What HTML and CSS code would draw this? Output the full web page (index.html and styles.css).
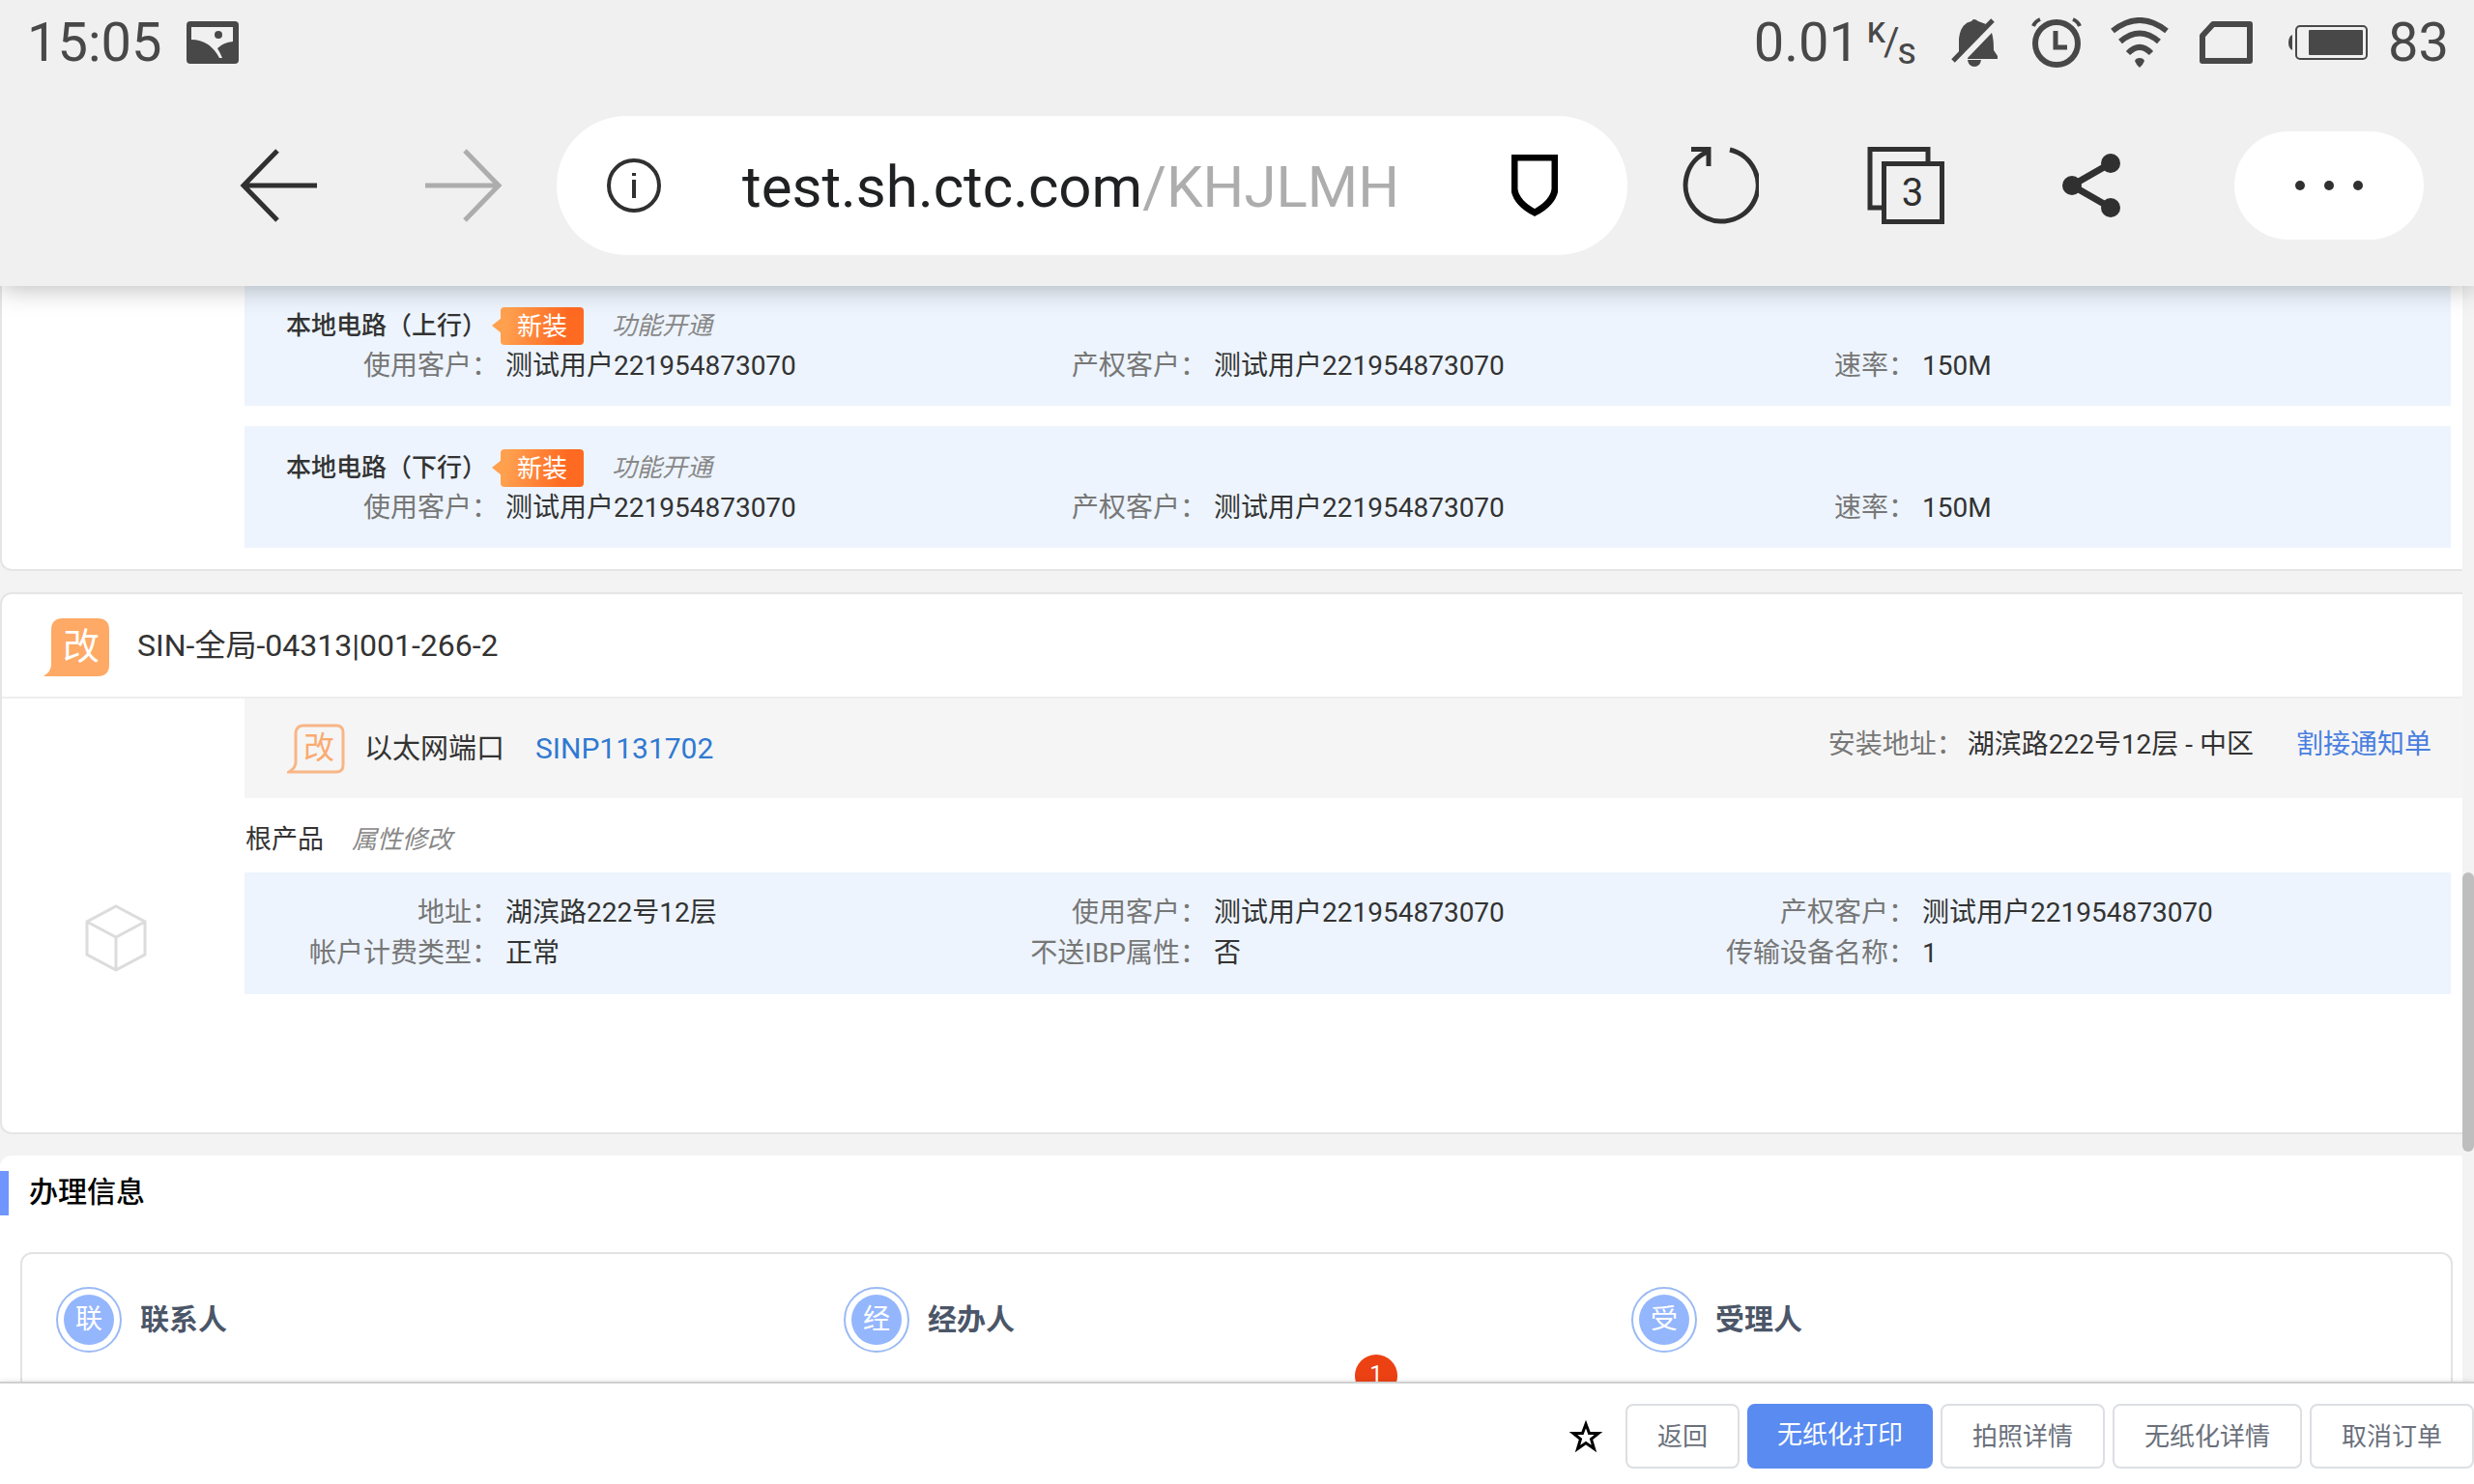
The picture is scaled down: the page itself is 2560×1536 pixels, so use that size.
FILE: index.html
```html
<!DOCTYPE html>
<html lang="zh-CN">
<head>
<meta charset="utf-8">
<title>订单详情</title>
<link rel="stylesheet" href="styles.css">
</head>
<body>
<header class="browser">
  <div class="status">
    <span class="clock">15:05</span>
    <svg class="picture" width="54" height="44" viewBox="0 0 54 44"><rect width="54" height="44" rx="4" fill="#484848"/><path d="M5 6H48V21Q38 22 32 28Q35 33 37 38H34Q24 19 5 19Z" fill="#f0f0f0"/><circle cx="33" cy="14" r="4" fill="#484848"/></svg>
    <div class="status-right">
      <span>0.01</span>
      <span class="rate"><sup>K</sup><i>/</i><sub>S</sub></span>
      <svg class="bell" width="50" height="52" viewBox="0 0 50 52"><path d="M9 38V22Q11 6 22 4Q24 0 29 4L37 7ZM18 42 43 16Q45 22 45 34L49 40V43H18ZM18 44H32Q31 51 25 51Q19 51 18 44Z" fill="#484848"/><path d="M3 45 44 3" stroke="#484848" stroke-width="5" fill="none"/></svg>
      <svg class="alarm" width="52" height="52" viewBox="0 0 52 52" fill="none" stroke="#484848"><circle cx="26" cy="27" r="22" stroke-width="6"/><path d="M25 14V31H37" stroke-width="5"/><path d="M2 9Q4 4 9 2M43 2Q48 4 50 9" stroke-width="4"/></svg>
      <svg class="wifi" width="60" height="52" viewBox="0 0 60 52" fill="none" stroke="#484848" stroke-width="6"><path d="M2 14Q30-8 58 14M10 25Q30 8 50 25M18 37Q30 25 42 37"/><path d="M30 42Q34 42 35 45Q33 50 30 52Q27 50 25 45Q26 42 30 42Z" fill="#484848" stroke="none"/></svg>
      <svg class="sim" width="56" height="44" viewBox="0 0 56 44"><path d="M14 3H52V41H3V15Z" fill="none" stroke="#484848" stroke-width="6" stroke-linejoin="round"/></svg>
      <svg class="battery" width="82" height="36" viewBox="0 0 82 36"><path d="M4 10V26Q0 24 0 18Q0 12 4 10Z" fill="#484848"/><rect x="8" y="1" width="73" height="34" rx="4" fill="none" stroke="#484848" stroke-width="2"/><rect x="21" y="5" width="56" height="26" rx="1" fill="#484848"/></svg>
      <span>83</span>
    </div>
  </div>
  <nav class="toolbar">
    <button class="tool" aria-label="后退"><svg width="80" height="80" viewBox="0 0 80 80"><path d="M39 4 4 40 39 76M4 40H80" fill="none" stroke="#303030" stroke-width="5"/></svg></button>
    <button class="tool forward" aria-label="前进"><svg width="80" height="80" viewBox="0 0 80 80"><path d="M41 4 76 40 41 76M76 40H0" fill="none" stroke="#adadad" stroke-width="5"/></svg></button>
    <button class="address">
      <svg width="56" height="56" viewBox="0 0 56 56"><circle cx="28" cy="28" r="26" fill="none" stroke="#303030" stroke-width="4"/><path d="M28 22V41M28 15V18" stroke="#303030" stroke-width="4"/></svg>
      <span class="url">test.sh.ctc.com<span class="path">/KHJLMH</span></span>
      <svg width="48" height="64" viewBox="0 0 48 64"><path d="M3 3H45V36Q43 50 24 60Q5 50 3 36Z" fill="none" stroke="#000" stroke-width="7"/></svg>
    </button>
    <button class="tool" aria-label="刷新"><svg width="80" height="80" viewBox="0 0 80 80" fill="none" stroke="#303030" stroke-width="5"><path d="M50 3A37.500 37.500 0 1 1 27 5"/><path d="M10 2.500H28V20"/></svg></button>
    <button class="tool tabs" aria-label="标签页"><svg width="80" height="80" viewBox="0 0 80 80" fill="none" stroke="#303030" stroke-width="5"><path d="M15 63H3V2.500H63V15"/><rect x="17.500" y="17.500" width="60" height="60"/></svg><span>3</span></button>
    <button class="tool share" aria-label="分享"><svg width="80" height="80" viewBox="0 0 80 80" fill="#303030"><path d="M60 17 20 40 60 63" fill="none" stroke="#303030" stroke-width="7"/><circle cx="20" cy="40" r="10"/><circle cx="60" cy="17" r="10"/><circle cx="60" cy="63" r="10"/></svg></button>
    <button class="more" aria-label="更多"><svg width="80" height="12" viewBox="0 0 80 12" fill="#303030"><circle cx="10" cy="6" r="5"/><circle cx="40" cy="6" r="5"/><circle cx="70" cy="6" r="5"/></svg></button>
  </nav>
</header>

<main class="viewport">
  <div class="page">
    <section class="card first">
      <div class="products">
        <article class="panel cut">
          <h3 class="circuit"><span>本地电路（上行）</span><span class="tag">新装</span><em>功能开通</em></h3>
          <dl class="fields">
            <div><dt>使用客户：</dt><dd>测试用户221954873070</dd></div>
            <div><dt>产权客户：</dt><dd>测试用户221954873070</dd></div>
            <div><dt>速率：</dt><dd>150M</dd></div>
          </dl>
        </article>
        <article class="panel">
          <h3 class="circuit"><span>本地电路（下行）</span><span class="tag">新装</span><em>功能开通</em></h3>
          <dl class="fields">
            <div><dt>使用客户：</dt><dd>测试用户221954873070</dd></div>
            <div><dt>产权客户：</dt><dd>测试用户221954873070</dd></div>
            <div><dt>速率：</dt><dd>150M</dd></div>
          </dl>
        </article>
      </div>
    </section>

    <section class="card">
      <h2 class="card-title">
        <span class="bubble large"><svg width="68" height="60" viewBox="0 0 68 60"><path d="M20 0H56Q68 0 68 12V48Q68 60 56 60H0Q8 55 8 48V12Q8 0 20 0Z" fill="#fea965"/></svg><b>改</b></span>
        SIN-全局-04313|001-266-2
      </h2>
      <div class="card-body">
        <div class="thumb"><svg width="64" height="70" viewBox="0 0 64 70" fill="none" stroke="#dcdcdc" stroke-width="3"><path d="M32 2 62 18V52L32 68 2 52V18ZM2 18 32 34 62 18M32 34V68"/></svg></div>
        <div class="detail">
          <div class="port">
            <span class="bubble small"><svg width="60" height="52" viewBox="0 0 60 52"><path d="M17 2H51Q58 2 58 9V43Q58 50 51 50H2Q9 46 9 40V9Q10 2 17 2Z" fill="none" stroke="#f8b686" stroke-width="3"/></svg><b>改</b></span>
            <span class="port-name">以太网端口</span>
            <a class="port-id" href="#port">SINP1131702</a>
            <div class="install"><span class="muted">安装地址：</span><span>湖滨路222号12层 - 中区</span><a href="#notice">割接通知单</a></div>
          </div>
          <h3 class="root"><span>根产品</span><em>属性修改</em></h3>
          <dl class="fields panel attributes">
            <div><dt>地址：</dt><dd>湖滨路222号12层</dd></div>
            <div><dt>使用客户：</dt><dd>测试用户221954873070</dd></div>
            <div><dt>产权客户：</dt><dd>测试用户221954873070</dd></div>
            <div><dt>帐户计费类型：</dt><dd>正常</dd></div>
            <div><dt>不送IBP属性：</dt><dd>否</dd></div>
            <div><dt>传输设备名称：</dt><dd>1</dd></div>
          </dl>
        </div>
      </div>
    </section>

    <section class="handling">
      <h2 class="section-title">办理信息</h2>
      <div class="contacts">
        <div class="contact"><h3><span class="avatar"><i>联</i></span>联系人</h3></div>
        <div class="contact"><h3><span class="avatar"><i>经</i></span>经办人</h3><span class="count">1</span></div>
        <div class="contact"><h3><span class="avatar"><i>受</i></span>受理人</h3></div>
      </div>
    </section>
  </div>
  <div class="scrollbar"><div class="scroll-thumb"></div></div>
</main>

<footer class="actions">
  <button class="star" aria-label="收藏"><svg width="34" height="34" viewBox="0 0 34 34"><path d="M17 4 20.500 13.500H30L22.500 19.500 25.500 29.500 17 23.500 8.500 29.500 11.500 19.500 4 13.500H13.500Z" fill="none" stroke="#000" stroke-width="3"/></svg></button>
  <button class="btn">返回</button>
  <button class="btn primary">无纸化打印</button>
  <button class="btn">拍照详情</button>
  <button class="btn">无纸化详情</button>
  <button class="btn">取消订单</button>
</footer>
</body>
</html>
```
FILE: styles.css
```css
* { box-sizing: border-box; }

body {
  margin: 0;
  height: 100vh;
  display: flex;
  flex-direction: column;
  overflow: hidden;
  background: #f3f3f3;
  color: #333;
  font-family: Roboto, "Noto Sans CJK SC", sans-serif;
  font-size: 28px;
  line-height: 42px;
}

h2, h3, dl, dd { margin: 0; font-weight: 400; }
button { margin: 0; padding: 0; border: 0; background: none; font: inherit; color: inherit; }
a { color: #4a7fe0; text-decoration: none; }
svg { display: block; flex: none; }
em { color: #888; font-size: 26px; font-weight: 400; }

/* Browser chrome */
.browser {
  position: relative;
  z-index: 1;
  background: #f0f0f0;
  box-shadow: 0 2px 26px rgba(0, 0, 0, .28);
}
.status {
  display: flex;
  align-items: center;
  height: 88px;
  padding: 0 26px 0 28px;
  color: #484848;
  font-size: 56px;
  line-height: 88px;
}
.picture { margin-left: 26px; }
.status-right { display: flex; align-items: center; margin-left: auto; }
.rate { position: relative; width: 52px; height: 56px; margin: 0 34px 0 8px; font-size: 30px; font-weight: 500; line-height: 32px; }
.rate sup, .rate sub, .rate i { position: absolute; font-size: inherit; line-height: inherit; }
.rate sup { left: 0; top: 2px; }
.rate i { left: 17px; top: 12px; font-size: 40px; font-weight: 400; font-style: normal; }
.rate sub { right: 2px; bottom: 0; }
.alarm { margin-left: 34px; }
.wifi { margin-left: 30px; }
.sim { margin-left: 32px; }
.battery { margin: 0 21px 0 36px; }

.toolbar {
  display: flex;
  align-items: center;
  height: 208px;
  padding: 0 52px 0 248px;
}
.tool { flex: none; width: 80px; height: 80px; margin-right: 112px; }
.forward { margin-right: 56px; }
.share { margin-right: 108px; }
.tabs { position: relative; }
.tabs span { position: absolute; left: 17px; top: 17px; width: 60px; font-size: 40px; line-height: 62px; text-align: center; color: #303030; }
.address {
  flex: 1;
  display: flex;
  align-items: center;
  height: 144px;
  margin-right: 56px;
  padding: 0 72px 0 52px;
  border-radius: 72px;
  background: #fff;
  text-align: left;
}
.url { flex: 1; padding: 4px 0 0 84px; color: #202122; font-size: 60px; line-height: 72px; }
.path { color: #adadad; }
.more { display: grid; place-items: center; width: 196px; height: 112px; border-radius: 56px; background: #fff; }

/* Page */
.viewport { flex: 1; min-height: 0; display: flex; overflow: hidden; }
.page { flex: 1; min-width: 0; }
.card { margin-bottom: 22px; border: 2px solid #e5e5e5; border-right: 0; border-radius: 12px 0 0 12px; background: #fff; }
.card.first { border-top: 0; border-top-left-radius: 0; }
.products { display: grid; gap: 21px; margin: 0 12px 22px 251px; }
.panel { padding: 22px 0 20px; background: #edf4fd; }
.panel.cut { padding-top: 20px; }
.circuit { display: flex; align-items: center; padding-left: 43px; font-size: 26px; font-weight: 500; }
.tag {
  position: relative;
  width: 86px;
  height: 39px;
  margin: 0 29px 0 14px;
  border-radius: 4px;
  background: linear-gradient(100deg, #ffa04f 10%, #ff6a22 75%);
  color: #fff;
  font-weight: 400;
  line-height: 40px;
  text-align: center;
}
.tag::before { content: ""; position: absolute; left: -9px; top: 11px; border: solid transparent; border-width: 8px 10px 8px 0; border-right-color: #ffa04f; }
.fields { display: grid; grid-template-columns: repeat(3, 1fr); padding-left: 27px; padding-right: 57px; }
.fields > div { display: flex; gap: 7px; }
.fields dt { width: 236px; text-align: right; color: #777; }
.muted { color: #777; }

.card-title { display: flex; align-items: center; height: 108px; padding: 0 43px; border-bottom: 2px solid #eee; font-size: 32px; }
.bubble { position: relative; flex: none; }
.bubble b { position: absolute; font-weight: 400; }
.large { margin-right: 29px; padding-top: 4px; }
.large b { left: 20px; top: 14px; color: #fff; font-size: 38px; line-height: 38px; }
.small { margin-right: 20px; }
.small b { left: 17px; top: 9px; color: #fbaa70; font-size: 32px; line-height: 32px; }
.card-body { display: flex; min-height: 449px; }
.thumb { width: 251px; padding: 213px 0 0 86px; }
.detail { flex: 1; }
.port { display: flex; align-items: center; height: 103px; padding: 0 32px 0 44px; background: #f5f5f5; }
.port-name { font-size: 29px; }
.port-id { margin-left: 32px; color: #3079d1; font-size: 30px; }
.install { display: flex; margin-left: auto; padding-bottom: 8px; }
.install a { margin-left: 44px; }
.muted { margin-right: 4px; }
.root { display: flex; gap: 29px; padding: 22px 0 13px 1px; font-size: 27px; }
.attributes { margin-right: 12px; padding-top: 21px; padding-bottom: 21px; }

.handling { border-radius: 12px 0 0 0; padding: 16px 10px 0 0; background: #fff; }
.section-title { height: 46px; border-left: 9px solid #6f95ff; padding-left: 21px; color: #000; font-size: 30px; font-weight: 500; line-height: 44px; }
.contacts {
  display: grid;
  grid-template-columns: repeat(3, 815fr) 68fr;
  min-height: 300px;
  margin: 38px 0 0 21px;
  border: 2px solid #e3e3e5;
  border-radius: 12px;
}
.contact { position: relative; padding: 34px 0 0 35px; }
.contact h3 { display: flex; align-items: center; gap: 19px; color: #4b5668; font-size: 30px; font-weight: 700; }
.avatar { display: grid; place-items: center; width: 68px; height: 68px; border: 2px solid #9bbaf5; border-radius: 50%; }
.avatar i { display: block; width: 52px; height: 52px; border-radius: 50%; background: #94b6fd; color: #fff; font-size: 28px; font-style: normal; font-weight: 400; line-height: 52px; text-align: center; }
.count { position: absolute; right: 207px; top: 104px; width: 44px; height: 44px; border-radius: 50%; background: #ec4113; color: #fff; font-size: 24px; line-height: 40px; text-align: center; }

.scrollbar { position: relative; width: 12px; background: #f3f3f3; }
.scroll-thumb { position: absolute; top: 53.5%; right: 0; left: 0; height: 25.5%; border-radius: 6px; background: #bebebe; }

/* Action bar */
.actions {
  position: relative;
  display: flex;
  justify-content: flex-end;
  align-items: center;
  gap: 8px;
  padding: 21px 0 16px;
  border-top: 2px solid #cfcfcf;
  background: #fff;
  box-shadow: 0 0 6px rgba(0, 0, 0, .12);
}
.star { margin-right: 16px; }
.btn { height: 67px; padding: 0 31px; border: 2px solid #dcdfe3; border-radius: 8px; background: #fff; color: #6a707b; font-size: 26px; line-height: 60px; }
.primary { padding: 0 29px 4px; border-color: #5a8bf0; background: #5a8bf0; color: #fff; }
```
